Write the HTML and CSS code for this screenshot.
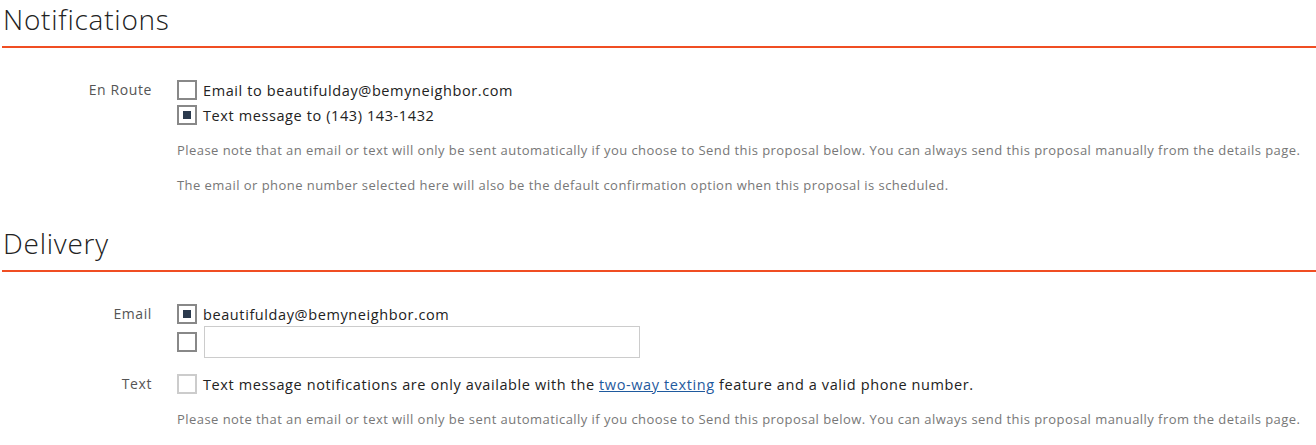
FILE: index.html
```html
<!DOCTYPE html>
<html>
<head>
<meta charset="utf-8">
<link rel="stylesheet" href="styles.css">
</head>
<body>
<section class="section">
  <h2 class="section-title">Notifications</h2>
  <div class="section-body">
    <div class="field">
      <div class="field-label">En Route</div>
      <div class="field-control">
        <label class="check-row"><span class="box"></span><span class="check-text">Email to beautifulday@bemyneighbor.com</span></label>
        <label class="check-row"><span class="box checked"></span><span class="check-text">Text message to (143) 143-1432</span></label>
        <p class="note note-first">Please note that an email or text will only be sent automatically if you choose to Send this proposal below. You can always send this proposal manually from the details page.</p>
        <p class="note">The email or phone number selected here will also be the default confirmation option when this proposal is scheduled.</p>
      </div>
    </div>
  </div>
</section>
<section class="section section-delivery">
  <h2 class="section-title">Delivery</h2>
  <div class="section-body">
    <div class="field">
      <div class="field-label">Email</div>
      <div class="field-control">
        <label class="check-row row-tight"><span class="box checked"></span><span class="check-text">beautifulday@bemyneighbor.com</span></label>
        <div class="check-row input-row"><span class="box"></span><span class="text-input"></span></div>
      </div>
    </div>
    <div class="field field-text">
      <div class="field-label">Text</div>
      <div class="field-control">
        <label class="check-row"><span class="box disabled"></span><span class="check-text">Text message notifications are only available with the <a class="link" href="#">two-way texting</a> feature and a valid phone number.</span></label>
        <p class="note note-first">Please note that an email or text will only be sent automatically if you choose to Send this proposal below. You can always send this proposal manually from the details page.</p>
      </div>
    </div>
  </div>
</section>
</body>
</html>
```
FILE: styles.css
```css
html, body {
  margin: 0;
  padding: 0;
  background: #fff;
}
body {
  font-family: "Open Sans", Lato, sans-serif;
  color: #222;
  width: 1316px;
  overflow: hidden;
}
.section-title {
  margin: 0 0 0 2px;
  padding: 0 0 0 1px;
  font-size: 28px;
  font-weight: 300;
  letter-spacing: 0.75px;
  line-height: 38px;
  color: #222;
  border-bottom: 2px solid #f04e23;
  padding-bottom: 8px;
}
.section-delivery {
  margin-top: 13px;
}
.section-body {
  padding: 32px 0 0 0;
}
.field {
  display: grid;
  grid-template-columns: 152px 1fr;
  column-gap: 25px;
}
.field-label {
  text-align: right;
  font-size: 14px;
  letter-spacing: 0.6px;
  color: #555;
  line-height: 20px;
}
.field-control {
  display: flex;
  flex-direction: column;
}
.check-row {
  display: flex;
  align-items: center;
  gap: 6px;
  height: 20px;
  margin-bottom: 5px;
  font-size: 14.5px;
  letter-spacing: 0.6px;
  color: #222;
}
.row-tight {
  margin-bottom: 2px;
}
.box {
  box-sizing: border-box;
  width: 20px;
  height: 20px;
  border: 2px solid #888;
  display: flex;
  align-items: center;
  justify-content: center;
  flex: none;
}
.box.checked::after {
  content: "";
  width: 8px;
  height: 8px;
  background: #2b3a4d;
}
.box.disabled {
  border-color: #ccc;
}
.input-row {
  height: 32px;
  gap: 7px;
}
.text-input {
  box-sizing: border-box;
  width: 436px;
  height: 32px;
  border: 1px solid #ccc;
}
.note {
  margin: 0 0 17px 0;
  font-size: 13px;
  letter-spacing: 0.45px;
  line-height: 18px;
  color: #777;
}
.note-first {
  margin-top: 11px;
}
.link {
  color: #1f5a9e;
  text-decoration: underline;
}
.field-text {
  margin-top: 11px;
}
```
